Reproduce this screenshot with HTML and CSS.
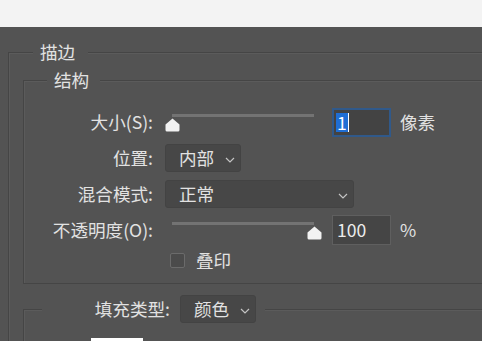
FILE: index.html
```html
<!DOCTYPE html>
<html lang="zh-CN">
<head>
<meta charset="utf-8">
<title>描边</title>
<link rel="stylesheet" href="styles.css">
</head>
<body>
<div class="topbar"></div>
<fieldset class="group outer">
  <legend>描边</legend>
  <fieldset class="group inner">
    <legend>结构</legend>
    <div class="form">
      <span class="lbl">大小(S):</span>
      <div class="ctrl">
        <div class="slider"><div class="rail"><div class="track"></div><svg class="thumb" style="left:0%" viewBox="0 0 15 14"><path d="M7.5 0.6 L14.5 6.6 V12 Q14.5 13.5 13 13.5 H2 Q0.5 13.5 0.5 12 V6.6 Z" fill="#f2f2f2"/></svg></div></div>
        <div class="num focus"><span class="sel">1</span><span class="caret"></span></div>
        <span class="unit">像素</span>
      </div>

      <span class="lbl">位置:</span>
      <div class="ctrl">
        <div class="select w76"><span>内部</span><svg class="chev" viewBox="0 0 10 6"><polyline points="1,1 5,5 9,1" fill="none" stroke="#c4c4c4" stroke-width="1.2"/></svg></div>
      </div>

      <span class="lbl">混合模式:</span>
      <div class="ctrl">
        <div class="select w189"><span>正常</span><svg class="chev" viewBox="0 0 10 6"><polyline points="1,1 5,5 9,1" fill="none" stroke="#c4c4c4" stroke-width="1.2"/></svg></div>
      </div>

      <span class="lbl">不透明度(O):</span>
      <div class="ctrl">
        <div class="slider"><div class="rail"><div class="track"></div><svg class="thumb" style="left:100%" viewBox="0 0 15 14"><path d="M7.5 0.6 L14.5 6.6 V12 Q14.5 13.5 13 13.5 H2 Q0.5 13.5 0.5 12 V6.6 Z" fill="#f2f2f2"/></svg></div></div>
        <div class="num"><span class="val">100</span></div>
        <span class="unit">%</span>
      </div>

      <span class="lbl"></span>
      <div class="ctrl check">
        <span class="box"></span><span class="check-text">叠印</span>
      </div>
    </div>
  </fieldset>

  <fieldset class="group fill">
    <legend>
      <span class="fill-lbl">填充类型:</span>
      <span class="select w76 fill-select"><span>颜色</span><svg class="chev" viewBox="0 0 10 6"><polyline points="1,1 5,5 9,1" fill="none" stroke="#c4c4c4" stroke-width="1.2"/></svg></span>
    </legend>
    <div class="swatch"></div>
  </fieldset>
</fieldset>
</body>
</html>
```

FILE: styles.css
```css
html, body {
  margin: 0;
  padding: 0;
  overflow: hidden;
}
body {
  width: 482px;
  height: 341px;
  background: #535353;
  color: #e2e2e2;
  font-family: "Noto Sans CJK SC", "Noto Sans", sans-serif;
  font-size: 17.6px;
  line-height: 20px;
}
.topbar {
  height: 27px;
  background: #f3f3f3;
}
.group {
  margin: 0;
  padding: 0;
  min-width: 0;
  border: 1px solid #454545;
  border-right: none;
  box-shadow: inset 1px 1px 0 #5b5b5b;
}
.group > legend {
  background: #535353;
  line-height: 20px;
}
.outer {
  margin: 15px 0 0 8px;
  padding: 8px 0 0 14px;
  border-bottom: none;
}
.outer > legend {
  margin-left: 10px;
  padding: 0 13px 0 7px;
}
.inner {
  padding: 17px 0 14px 0;
}
.inner > legend {
  margin-left: 23px;
  padding: 0 11px 0 7px;
}
.form {
  display: grid;
  grid-template-columns: 129px 1fr;
  grid-template-rows: 30px 30px 30px 30px 18px;
  column-gap: 11px;
  row-gap: 6px;
  align-items: center;
}
.lbl {
  text-align: right;
  white-space: nowrap;
}
.ctrl {
  display: flex;
  align-items: center;
  height: 100%;
}
.slider {
  box-sizing: border-box;
  width: 158px;
  height: 30px;
  padding: 0 8px;
  flex: none;
}
.rail {
  position: relative;
  height: 30px;
}
.track {
  position: relative;
  top: 7px;
  height: 3px;
  background: #737373;
}
.thumb {
  position: absolute;
  top: 11px;
  width: 15px;
  height: 14px;
  margin-left: -7.5px;
}
.num {
  box-sizing: border-box;
  width: 59px;
  height: 30px;
  margin-left: 10px;
  background: #454545;
  border: 1px solid #5f5f5f;
  display: flex;
  align-items: center;
  padding-left: 4px;
  flex: none;
}
.num.focus {
  height: 29px;
  border: 2px solid #30598a;
  padding-left: 2px;
  background: #434343;
}
.sel {
  background: #1f6ed4;
  color: #ffffff;
  line-height: 19px;
  padding: 0 1px;
}
.caret {
  width: 1px;
  height: 19px;
  background: #ffffff;
}
.val {
  color: #ececec;
}
.unit {
  margin-left: 9px;
}
.select {
  box-sizing: border-box;
  height: 28px;
  margin-left: 1px;
  background: #474747;
  border: 1px solid #434343;
  border-radius: 3px;
  display: flex;
  align-items: center;
  justify-content: space-between;
  padding: 0 5px 0 13px;
}
.w76 { width: 76px; }
.w189 { width: 189px; }
.chev {
  width: 10px;
  height: 6px;
  margin-top: 3px;
}
.box {
  box-sizing: border-box;
  width: 15px;
  height: 15px;
  margin-left: 6px;
  border: 1px solid #6b6b6b;
  background: #4b4b4b;
  border-radius: 2px;
}
.check-text {
  margin-left: 11px;
}
.fill {
  margin: 11px 0 0 0;
  padding: 15px 0 0 0;
  border-bottom: none;
}
.fill > legend {
  margin-left: 18px;
  padding: 0 9px 0 0;
  display: flex;
  align-items: center;
}
.fill-lbl {
  width: 128px;
  text-align: right;
  margin-right: 10px;
}
.fill-select {
  margin-left: 0;
}
.swatch {
  width: 52px;
  height: 30px;
  margin-left: 67px;
  background: #ffffff;
}
```
